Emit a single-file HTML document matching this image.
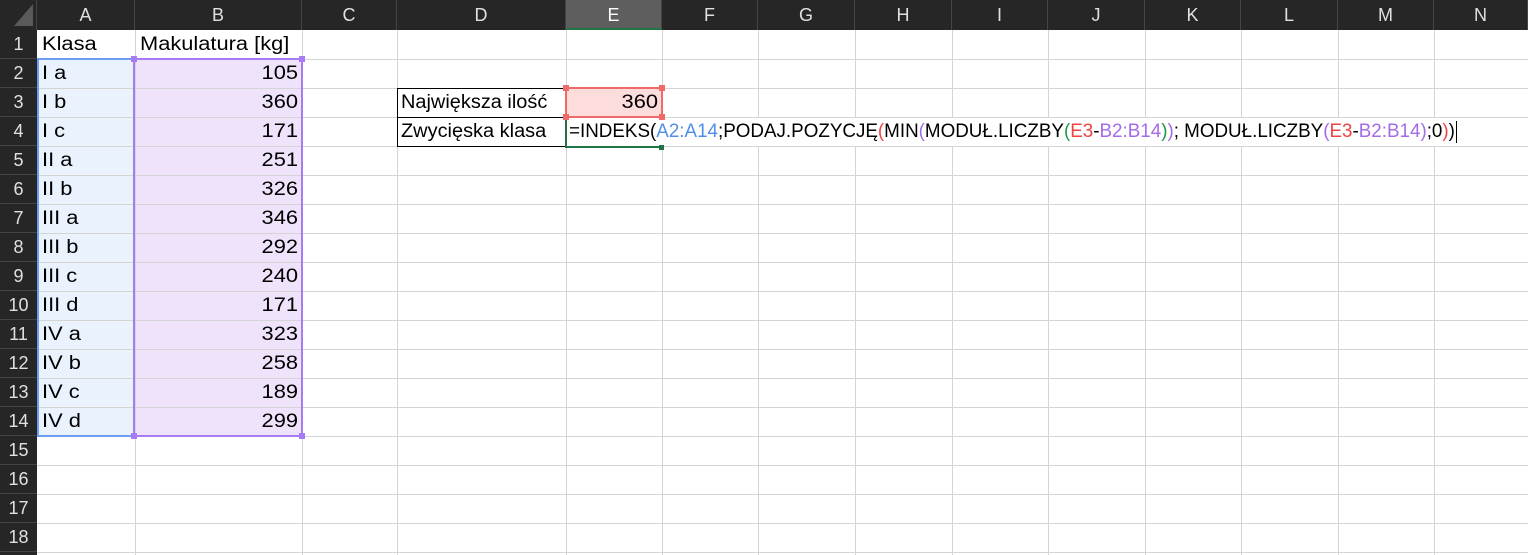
<!DOCTYPE html>
<html><head><meta charset="utf-8"><style>
*{margin:0;padding:0;box-sizing:border-box}
html,body{width:1528px;height:555px;overflow:hidden}
body{background:#fff;position:relative;font-family:"Liberation Sans",sans-serif;font-size:16px;color:#000}
.a{position:absolute}
.v{position:absolute;top:30px;width:1px;height:525px;background:#d4d4d4}
.h{position:absolute;left:37px;height:1px;width:1491px;background:#d4d4d4}
.hdr{position:absolute;top:0;height:30px;background:#262626;color:#e0e0e0;font-size:18px;line-height:30px;text-align:center;border-right:1px solid #444}
.rh{position:absolute;left:0;width:37px;height:29px;background:#262626;color:#e0e0e0;font-size:18px;line-height:29px;text-align:center;border-bottom:1px solid #444}
.t{position:absolute;height:29px;line-height:29px;font-size:19px;white-space:nowrap;transform:scaleX(1.15);transform-origin:left}
.r{text-align:right;transform-origin:right}
.bl{color:#4f8fe8}.pu{color:#a36be8}.rd{color:#ee4444}.gr{color:#1a9a4a}
</style></head><body>
<div class="a" style="left:37px;top:59px;width:98px;height:377px;background:#eaf2fd"></div>
<div class="a" style="left:135px;top:59px;width:167px;height:377px;background:#efe3fb"></div>
<div class="a" style="left:566px;top:88px;width:96px;height:29px;background:#fddcdc"></div>
<div class="v" style="left:135px"></div><div class="v" style="left:302px"></div><div class="v" style="left:397px"></div><div class="v" style="left:566px"></div><div class="v" style="left:662px"></div><div class="v" style="left:758px"></div><div class="v" style="left:855px"></div><div class="v" style="left:952px"></div><div class="v" style="left:1048px"></div><div class="v" style="left:1145px"></div><div class="v" style="left:1241px"></div><div class="v" style="left:1338px"></div><div class="v" style="left:1434px"></div>
<div class="h" style="top:59px"></div><div class="h" style="top:88px"></div><div class="h" style="top:117px"></div><div class="h" style="top:146px"></div><div class="h" style="top:175px"></div><div class="h" style="top:204px"></div><div class="h" style="top:233px"></div><div class="h" style="top:262px"></div><div class="h" style="top:291px"></div><div class="h" style="top:320px"></div><div class="h" style="top:349px"></div><div class="h" style="top:378px"></div><div class="h" style="top:407px"></div><div class="h" style="top:436px"></div><div class="h" style="top:465px"></div><div class="h" style="top:494px"></div><div class="h" style="top:523px"></div><div class="h" style="top:552px"></div>
<div class="a" style="left:567px;top:118px;width:895px;height:28px;background:#fff"></div>
<div class="a" style="left:397px;top:88px;width:170px;height:59px;border:1px solid #000"></div>
<div class="a" style="left:397px;top:117px;width:170px;height:1px;background:#000"></div>
<div class="a" style="left:37px;top:58px;width:99px;height:379px;border:2px solid #6b9ef0;border-right:none"></div>
<div class="a" style="left:133px;top:58px;width:170px;height:379px;border:2px solid #a77bf3"></div>
<div class="a" style="left:565px;top:87px;width:98px;height:31px;border:2px solid #f06a6a"></div>
<div class="a" style="left:565px;top:146px;width:98px;height:2px;background:#217346"></div>
<div class="a" style="left:565px;top:116px;width:2px;height:32px;background:#217346"></div>
<div class="a" style="left:131px;top:56px;width:6px;height:6px;background:#a77bf3"></div>
<div class="a" style="left:299px;top:56px;width:6px;height:6px;background:#a77bf3"></div>
<div class="a" style="left:131px;top:433px;width:6px;height:6px;background:#a77bf3"></div>
<div class="a" style="left:299px;top:433px;width:6px;height:6px;background:#a77bf3"></div>
<div class="a" style="left:563px;top:85px;width:6px;height:6px;background:#f06a6a"></div>
<div class="a" style="left:659px;top:85px;width:6px;height:6px;background:#f06a6a"></div>
<div class="a" style="left:563px;top:114px;width:6px;height:6px;background:#f06a6a"></div>
<div class="a" style="left:659px;top:114px;width:6px;height:6px;background:#f06a6a"></div>
<div class="a" style="left:659px;top:145px;width:5px;height:5px;background:#217346"></div>
<div class="hdr" style="left:0;width:37px"><svg width="37" height="30" style="position:absolute;left:0;top:0"><polygon points="33,4 33,26 14,26" fill="#5a5a5a"/></svg></div>
<div class="hdr" style="left:37px;width:98px">A</div><div class="hdr" style="left:135px;width:167px">B</div><div class="hdr" style="left:302px;width:95px">C</div><div class="hdr" style="left:397px;width:169px">D</div><div class="hdr" style="left:566px;width:96px;background:#5e5e5e;border-bottom:2px solid #217346;color:#fff">E</div><div class="hdr" style="left:662px;width:96px">F</div><div class="hdr" style="left:758px;width:97px">G</div><div class="hdr" style="left:855px;width:97px">H</div><div class="hdr" style="left:952px;width:96px">I</div><div class="hdr" style="left:1048px;width:97px">J</div><div class="hdr" style="left:1145px;width:96px">K</div><div class="hdr" style="left:1241px;width:97px">L</div><div class="hdr" style="left:1338px;width:96px">M</div><div class="hdr" style="left:1434px;width:94px">N</div>
<div class="rh" style="top:30px">1</div><div class="rh" style="top:59px">2</div><div class="rh" style="top:88px">3</div><div class="rh" style="top:117px">4</div><div class="rh" style="top:146px">5</div><div class="rh" style="top:175px">6</div><div class="rh" style="top:204px">7</div><div class="rh" style="top:233px">8</div><div class="rh" style="top:262px">9</div><div class="rh" style="top:291px">10</div><div class="rh" style="top:320px">11</div><div class="rh" style="top:349px">12</div><div class="rh" style="top:378px">13</div><div class="rh" style="top:407px">14</div><div class="rh" style="top:436px">15</div><div class="rh" style="top:465px">16</div><div class="rh" style="top:494px">17</div><div class="rh" style="top:523px">18</div><div class="rh" style="top:552px"></div>
<div class="t" style="left:42px;top:30px">Klasa</div><div class="t" style="left:140px;top:30px">Makulatura [kg]</div>
<div class="t" style="left:42px;top:59px">I a</div><div class="t" style="left:42px;top:88px">I b</div><div class="t" style="left:42px;top:117px">I c</div><div class="t" style="left:42px;top:146px">II a</div><div class="t" style="left:42px;top:175px">II b</div><div class="t" style="left:42px;top:204px">III a</div><div class="t" style="left:42px;top:233px">III b</div><div class="t" style="left:42px;top:262px">III c</div><div class="t" style="left:42px;top:291px">III d</div><div class="t" style="left:42px;top:320px">IV a</div><div class="t" style="left:42px;top:349px">IV b</div><div class="t" style="left:42px;top:378px">IV c</div><div class="t" style="left:42px;top:407px">IV d</div>
<div class="t r" style="left:200px;width:98px;top:59px">105</div><div class="t r" style="left:200px;width:98px;top:88px">360</div><div class="t r" style="left:200px;width:98px;top:117px">171</div><div class="t r" style="left:200px;width:98px;top:146px">251</div><div class="t r" style="left:200px;width:98px;top:175px">326</div><div class="t r" style="left:200px;width:98px;top:204px">346</div><div class="t r" style="left:200px;width:98px;top:233px">292</div><div class="t r" style="left:200px;width:98px;top:262px">240</div><div class="t r" style="left:200px;width:98px;top:291px">171</div><div class="t r" style="left:200px;width:98px;top:320px">323</div><div class="t r" style="left:200px;width:98px;top:349px">258</div><div class="t r" style="left:200px;width:98px;top:378px">189</div><div class="t r" style="left:200px;width:98px;top:407px">299</div>
<div class="t" style="left:401px;top:88px;transform:scaleX(1.05)">Największa ilość</div><div class="t" style="left:401px;top:117px;transform:scaleX(1.05)">Zwycięska klasa</div>
<div class="t r" style="left:566px;width:92px;top:88px">360</div>
<div class="t" style="left:569px;top:117px;font-size:19px;transform:scaleX(0.99)">=INDEKS(<span class="bl">A2:A14</span>;PODAJ.POZYCJĘ<span class="rd">(</span>MIN<span class="pu">(</span>MODUŁ.LICZBY<span class="gr">(</span><span class="rd">E3</span>-<span class="pu">B2:B14</span><span class="gr">)</span><span class="pu">)</span>; MODUŁ.LICZBY<span class="pu">(</span><span class="rd">E3</span>-<span class="pu">B2:B14</span><span class="pu">)</span>;0<span class="rd">)</span>)</div>
<div class="a" style="left:1456px;top:121px;width:1px;height:22px;background:#000"></div>
</body></html>
